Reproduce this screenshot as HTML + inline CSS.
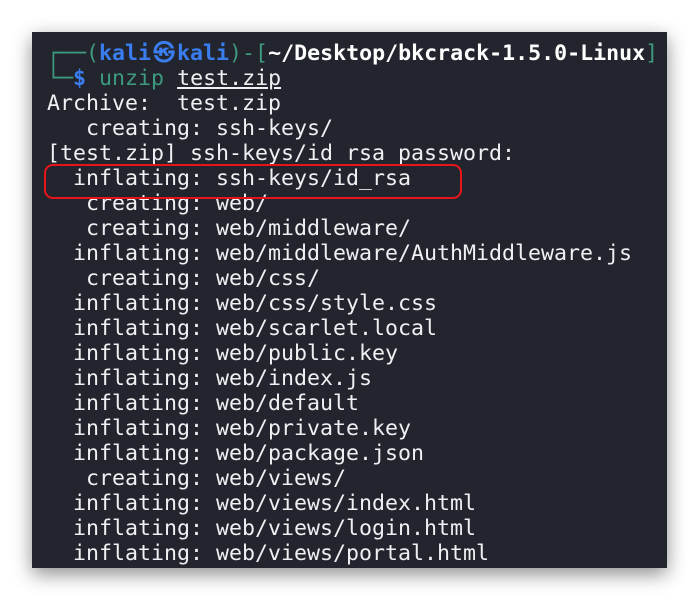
<!DOCTYPE html>
<html><head><style>
html,body{margin:0;padding:0;background:#fff;width:699px;height:600px;overflow:hidden}
.term{position:absolute;left:32px;top:32px;width:635px;height:536px;background:#23252e;box-shadow:0 6px 18px rgba(0,0,0,.45)}
pre{position:absolute;left:47px;top:41px;margin:0;font-family:"DejaVu Sans Mono","Liberation Mono",monospace;font-size:21.6px;line-height:25px;color:#eef0f2}
.g{color:#3d9a7e}.b{color:#3a7df0;font-weight:bold}.w{font-weight:bold;color:#fff}.u{text-decoration:underline}
.k{display:inline-block;width:26px;text-align:center}
.box{position:absolute;left:44px;top:164px;width:414px;height:31px;border:2px solid #e8141a;border-radius:9px}
</style></head><body>
<div class="term"></div>
<pre><span class="g">┌──(</span><span class="b">kali<span class="k">㉿</span>kali</span><span class="g">)-[</span><span class="w">~/Desktop/bkcrack-1.5.0-Linux</span><span class="g">]</span>
<span class="g">└─</span><span class="b">$</span> <span class="g">unzip</span> <span class="u">test.zip</span>
Archive:  test.zip
   creating: ssh-keys/
[test.zip] ssh-keys/id_rsa password: 
  inflating: ssh-keys/id_rsa         
   creating: web/
   creating: web/middleware/
  inflating: web/middleware/AuthMiddleware.js  
   creating: web/css/
  inflating: web/css/style.css       
  inflating: web/scarlet.local       
  inflating: web/public.key          
  inflating: web/index.js            
  inflating: web/default             
  inflating: web/private.key         
  inflating: web/package.json        
   creating: web/views/
  inflating: web/views/index.html    
  inflating: web/views/login.html    
  inflating: web/views/portal.html   </pre>
<div class="box"></div>
</body></html>
